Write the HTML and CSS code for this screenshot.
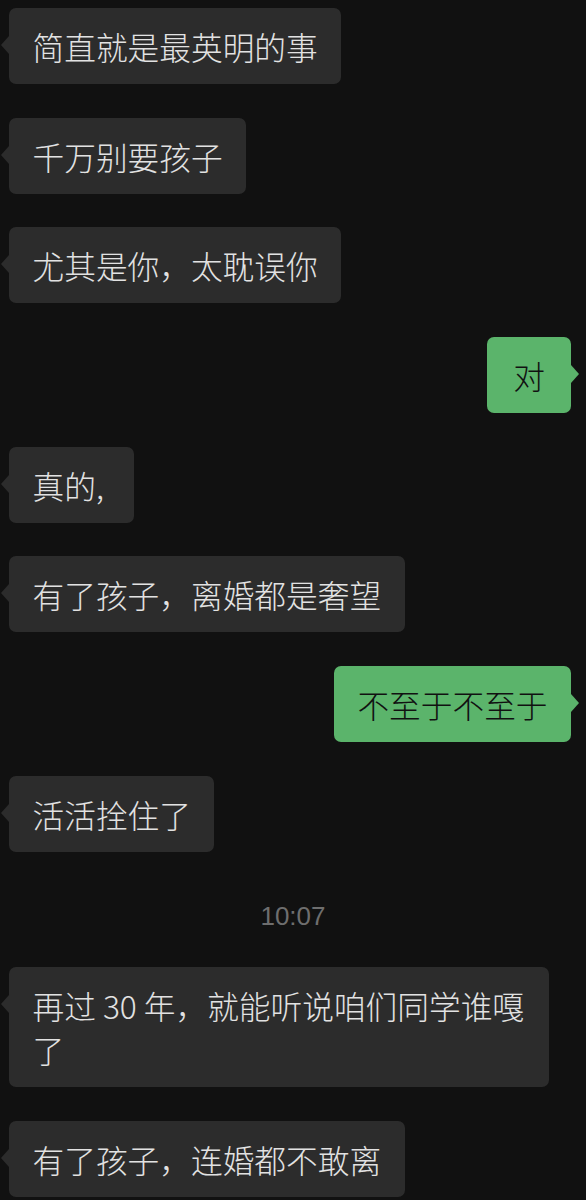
FILE: index.html
```html
<!DOCTYPE html>
<html lang="zh-CN">
<head>
    <meta charset="UTF-8">
    <meta name="viewport" content="width=device-width, initial-scale=1.0">
    <title>聊天记录</title>
    <link rel="stylesheet" href="styles.css">
</head>
<body>

<div class="chat">
    <div class="msg left"><div class="bubble">简直就是最英明的事</div></div>
    <div class="msg left"><div class="bubble">千万别要孩子</div></div>
    <div class="msg left"><div class="bubble">尤其是你，太耽误你</div></div>
    <div class="msg right"><div class="bubble single">对</div></div>
    <div class="msg left"><div class="bubble">真的,&nbsp;</div></div>
    <div class="msg left"><div class="bubble">有了孩子，离婚都是奢望</div></div>
    <div class="msg right"><div class="bubble">不至于不至于</div></div>
    <div class="msg left"><div class="bubble">活活拴住了</div></div>

    <div class="time">10:07</div>

    <div class="msg left"><div class="bubble">再过 30 年，就能听说咱们同学谁嘎了</div></div>
    <div class="msg left"><div class="bubble">有了孩子，连婚都不敢离</div></div>
</div>

</body>
</html>
```

FILE: styles.css
```css
body {
    margin: 0;
    padding: 0;
    background-color: #111111;
    font-family: "Noto Sans CJK SC", "Noto Sans", sans-serif;
}
.chat {
    display: flex;
    flex-direction: column;
    gap: 33.7px;
    padding-top: 8px;
    padding-bottom: 40px;
}
.msg {
    display: flex;
}
.msg.left {
    justify-content: flex-start;
    padding-left: 9px;
}
.msg.right {
    justify-content: flex-end;
    padding-right: 15px;
}
.bubble {
    position: relative;
    max-width: 540px;
    box-sizing: border-box;
    padding: 16px 23.5px;
    border-radius: 7px;
    font-size: 31.7px;
    font-weight: 300;
    line-height: 44px;
    background-color: #2c2c2c;
    color: #e2e2e2;
}
.bubble::before {
    content: "";
    position: absolute;
    top: 28px;
    width: 0;
    height: 0;
    border-top: 9px solid transparent;
    border-bottom: 9px solid transparent;
}
.left .bubble::before {
    left: -8px;
    border-right: 8px solid #2c2c2c;
}
.right .bubble {
    background-color: #5bb46b;
    color: #111111;
}
.right .bubble::before {
    right: -8px;
    border-left: 8px solid #5bb46b;
}
.bubble.single {
    min-width: 84px;
    text-align: center;
}
.time {
    margin-top: 14px;
    margin-bottom: 2px;
    text-align: center;
    font-family: "Liberation Sans", Arial, sans-serif;
    font-size: 26px;
    line-height: 32px;
    color: #6e6e6e;
}
```
